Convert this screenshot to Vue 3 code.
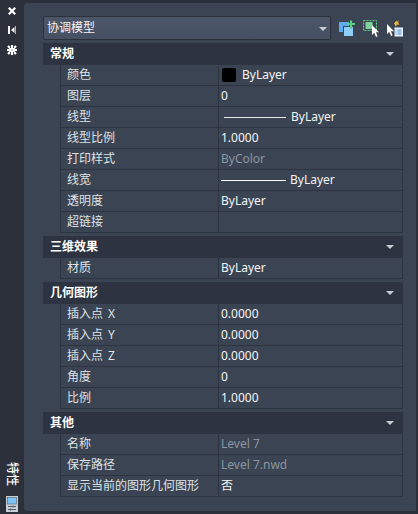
<script setup>
const sections = [
  { title: '常规', rows: [
    { label: '颜色', type: 'color', value: 'ByLayer' },
    { label: '图层', value: '0' },
    { label: '线型', type: 'line', value: 'ByLayer' },
    { label: '线型比例', value: '1.0000' },
    { label: '打印样式', value: 'ByColor', dim: true },
    { label: '线宽', type: 'line', thick: true, value: 'ByLayer' },
    { label: '透明度', value: 'ByLayer' },
    { label: '超链接', value: '' },
  ]},
  { title: '三维效果', rows: [{ label: '材质', value: 'ByLayer' }]},
  { title: '几何图形', rows: [
    { label: '插入点 X', value: '0.0000' },
    { label: '插入点 Y', value: '0.0000' },
    { label: '插入点 Z', value: '0.0000' },
    { label: '角度', value: '0' },
    { label: '比例', value: '1.0000' },
  ]},
  { title: '其他', rows: [
    { label: '名称', value: 'Level 7', dim: true },
    { label: '保存路径', value: 'Level 7.nwd', dim: true },
    { label: '显示当前的图形几何图形', value: '否' },
  ]},
]
</script>

<template>
  <div class="window">
    <aside class="strip">
      <div class="strip-top">
        <svg width="8" height="8" viewBox="0 0 8 8"><path d="M0.800 0.800l6.400 6.400M7.200 0.800l-6.400 6.400" stroke="#fff" stroke-width="2.200" fill="none"/></svg>
        <svg width="8" height="8" viewBox="0 0 8 8"><path d="M1 0v8" stroke="#fff" stroke-width="2"/><path d="M7.500 0v8" stroke="#aab2bb" stroke-width="1"/><path d="M6.500 1L3 4l3.500 3z" fill="#fff"/></svg>
        <svg width="10" height="10" viewBox="0 0 10 10"><path d="M1 1l8 8M9 1l-8 8M5 0v10M0 5h10" stroke="#fff" stroke-width="2.200" fill="none"/><path d="M4 4h2v2H4z" fill="#fff"/><path d="M3 2h1v1H3zM6 2h1v1H6zM3 7h1v1H3zM6 7h1v1H6zM4.500 4.500h1v1h-1z" fill="#3a4150"/></svg>
      </div>
      <div class="strip-bottom">
        <span class="vertical">特性</span>
        <svg width="12" height="16" viewBox="0 0 12 16"><rect width="12" height="16" fill="#c9ced4"/><rect x="1.500" y="1.500" width="9" height="6.500" fill="#7cc4f8" stroke="#4d5a69" stroke-width="0.600"/><path d="M2 10.500h8M2 13.500h8" stroke="#4d5a69"/><path d="M7 9.500v2M4.500 12.500v2" stroke="#4d5a69"/></svg>
      </div>
    </aside>
    <main class="panel">
      <div class="toolbar">
        <div class="select">
          <span>协调模型</span>
          <i class="caret"></i>
        </div>
        <div class="tools">
          <svg class="t1" width="17" height="17" viewBox="0 0 17 17">
            <rect x="0" y="2" width="10" height="10" fill="#5fabee"/>
            <rect x="4.500" y="6.500" width="10" height="10" stroke="#3b4453" fill="#8fcdfb"/>
            <path d="M8 4h8M12 0.500v8" stroke="#55d07a" stroke-width="2.200"/>
          </svg>
          <svg class="t2" width="16" height="17" viewBox="0 0 16 17">
            <rect x="0.500" y="0.500" width="13" height="10" fill="none" stroke="#5fd07f" stroke-dasharray="2 1"/>
            <rect x="2.500" y="2" width="7" height="7" fill="#7fd39a"/>
            <path d="M9 5v10l2.300-2.200 1.700 4.200 1.600-.7-1.700-4H16z" fill="#fff"/>
          </svg>
          <svg class="t3" width="16" height="17" viewBox="0 0 16 17">
            <path d="M0 4v10l2.300-2.200 1.700 4.200 1.600-.7-1.700-4H7z" fill="#fff"/>
            <path d="M7 3.500L9.500 0.500l.5 1.500 1.500-2-.3 3 1.300 1.500-2.500.2-1.500 2-.5-2z" fill="#f5b53c"/>
            <rect x="7.500" y="7.500" width="8.500" height="9" fill="#eaf4fd"/>
            <path d="M10.500 10h4M10.500 12h4M10.500 14h4M8.500 10h1M8.500 12h1M8.500 14h1" stroke="#3d87cf"/>
          </svg>
        </div>
      </div>
      <section v-for="s in sections" :key="s.title" class="section">
        <header class="section-head"><b>{{ s.title }}</b><i class="caret head"></i></header>
        <div v-for="r in s.rows" :key="r.label" class="row">
          <div class="label">{{ r.label }}</div>
          <div class="value" :class="{ dim: r.dim }">
            <i v-if="r.type === 'color'" class="swatch"></i>
            <i v-if="r.type === 'line'" class="line" :class="{ thick: r.thick }"></i>
            <span>{{ r.value }}</span>
          </div>
        </div>
      </section>
    </main>
  </div>
</template>

<style>
html, body { margin: 0; background: #2b303b; }
</style>

<style scoped>
.window {
  width: 418px; height: 514px; display: flex; overflow: hidden;
  background: #2b303b; font-family: "Noto Sans", "Noto Sans CJK SC", sans-serif; font-size: 12px; color: #f5f5f5;
}
.strip { width: 24px; flex: none; display: flex; flex-direction: column; justify-content: space-between; align-items: center; padding: 7px 0 2px; box-sizing: border-box; }
.strip-top { display: flex; flex-direction: column; align-items: center; gap: 11px; }
.strip-top svg, .strip-bottom svg { display: block; }
.strip-bottom { display: flex; flex-direction: column; align-items: center; gap: 9px; }
.vertical { writing-mode: vertical-rl; text-orientation: sideways; color: #fff; line-height: 14px; height: 25px; font-weight: 500; }
.panel { flex: 1; margin: 3px 2px 3px 0; background: #3b4453; border-radius: 4px 0 0 4px; padding: 13px 13px 0 19px; box-sizing: border-box; }
.toolbar { display: flex; height: 24px; margin-bottom: 3px; }
.select { width: 288px; height: 24px; box-sizing: border-box; background: linear-gradient(#4b5669, #465062); border: 1px solid #2b303b; border-radius: 2px; display: flex; align-items: center; justify-content: space-between; padding: 0 3px 1px 3px; line-height: 20px; }
.tools { display: flex; align-items: flex-start; padding-top: 4px; margin-left: 8px; }
.t2 { margin-left: 7px; }
.t3 { margin-left: 8px; }
.caret { width: 0; height: 0; border-style: solid; border-color: #c8ccd2 transparent transparent; border-width: 4px 4px 0; margin-top: 2px; }
.caret.head { margin: 0 9px 0 0; }
.section { margin-bottom: 3px; }
.section-head { height: 22px; background: #2d3340; padding-left: 7px; display: flex; justify-content: space-between; align-items: center; line-height: 20px; padding-bottom: 1px; box-sizing: border-box; }
.section-head b { font-weight: 700; color: #fff; }
.row { display: grid; grid-template-columns: 158px 1fr; height: 21px; margin-left: 17px; box-sizing: border-box; border-left: 1px solid #2d3340; border-right: 1px solid #2d3340; border-bottom: 1px solid #2d3340; }
.label { padding-left: 6px; color: #dfe2e6; line-height: 19px; white-space: nowrap; word-spacing: 2px; border-right: 1px solid #2d3340; }
.value { padding-left: 2px; display: flex; align-items: center; color: #f5f5f5; line-height: 20px; }
.value.dim { color: #8b95a1; }
.swatch { width: 14px; height: 14px; background: #000; border-radius: 2px; margin: 0 6px 0 1px; }
.line { width: 62px; height: 1px; background: #e6e8ea; margin: 0 5px 0 3px; }
.line.thick { width: 65px; background: #fff; margin: 0 4px 0 0; }
</style>
